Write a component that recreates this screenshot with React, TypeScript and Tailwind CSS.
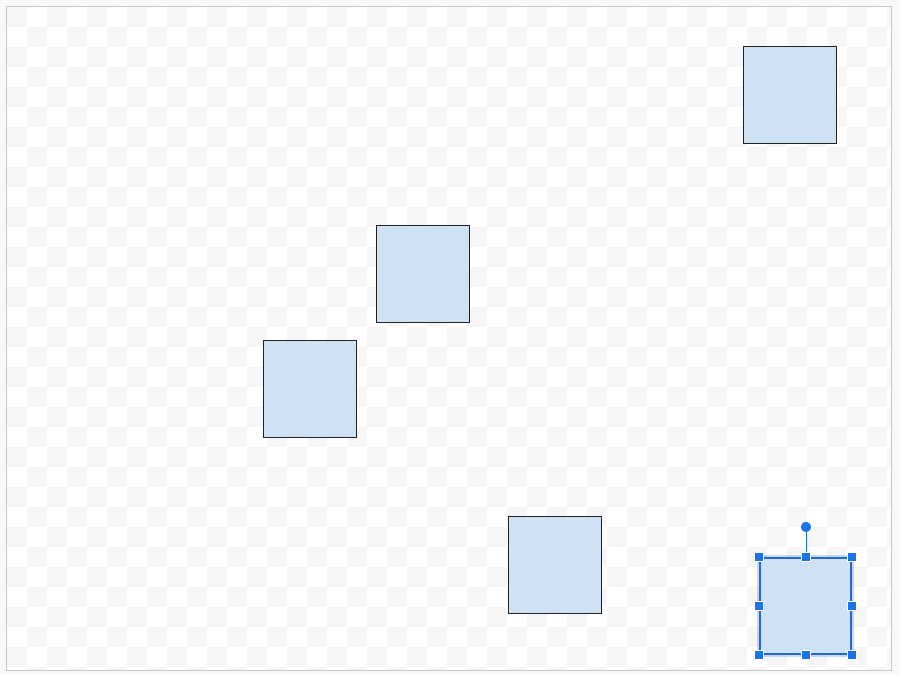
import React from "react";

type Shape = { id: string; x: number; y: number; w: number; h: number };

// canvas coordinates (relative to the drawing area's inner edge)
const shapes: Shape[] = [
  { id: "s1", x: 736, y: 39, w: 94, h: 98 },
  { id: "s2", x: 369, y: 218, w: 94, h: 98 },
  { id: "s3", x: 256, y: 333, w: 94, h: 98 },
  { id: "s4", x: 501, y: 509, w: 94, h: 98 },
];

const selected: Shape = { id: "s5", x: 752, y: 550, w: 93, h: 98 };

function Handle({ left, top }: { left: string; top: string }) {
  return (
    <div
      className="absolute w-[10px] h-[10px] -ml-[5px] -mt-[5px] bg-[#1a73e8] border border-white"
      style={{ left, top }}
    />
  );
}

export default function App() {
  return (
    <div className="w-[900px] h-[675px] bg-[#f8f9fa] p-[6px] font-['Liberation_Sans',sans-serif]">
      <div className="relative w-[886px] h-[665px] border border-[#c6c6c6] overflow-hidden bg-white bg-[conic-gradient(#ffffff_25%,#f6f6f6_0_50%,#ffffff_0_75%,#f6f6f6_0)] bg-[length:40px_40px]">
        {shapes.map((s) => (
          <div
            key={s.id}
            className="absolute border border-[#222] bg-[#cfe2f3]"
            style={{ left: s.x, top: s.y, width: s.w, height: s.h }}
          />
        ))}

        {/* selected shape with resize + rotate handles */}
        <div
          className="absolute"
          style={{ left: selected.x, top: selected.y, width: selected.w, height: selected.h }}
        >
          <div className="absolute inset-0 bg-[#cfe2f3] border-2 border-[#2868cc] ring-2 ring-[#1a73e8]/25" />
          <div className="absolute left-1/2 -top-[26px] w-px h-[26px] bg-[#1a73e8]" />
          <div className="absolute left-1/2 -top-[35px] -ml-[5px] w-[10px] h-[10px] rounded-full bg-[#1a73e8]" />
          <Handle left="0%" top="0%" />
          <Handle left="50%" top="0%" />
          <Handle left="100%" top="0%" />
          <Handle left="0%" top="50%" />
          <Handle left="100%" top="50%" />
          <Handle left="0%" top="100%" />
          <Handle left="50%" top="100%" />
          <Handle left="100%" top="100%" />
        </div>
      </div>
    </div>
  );
}
